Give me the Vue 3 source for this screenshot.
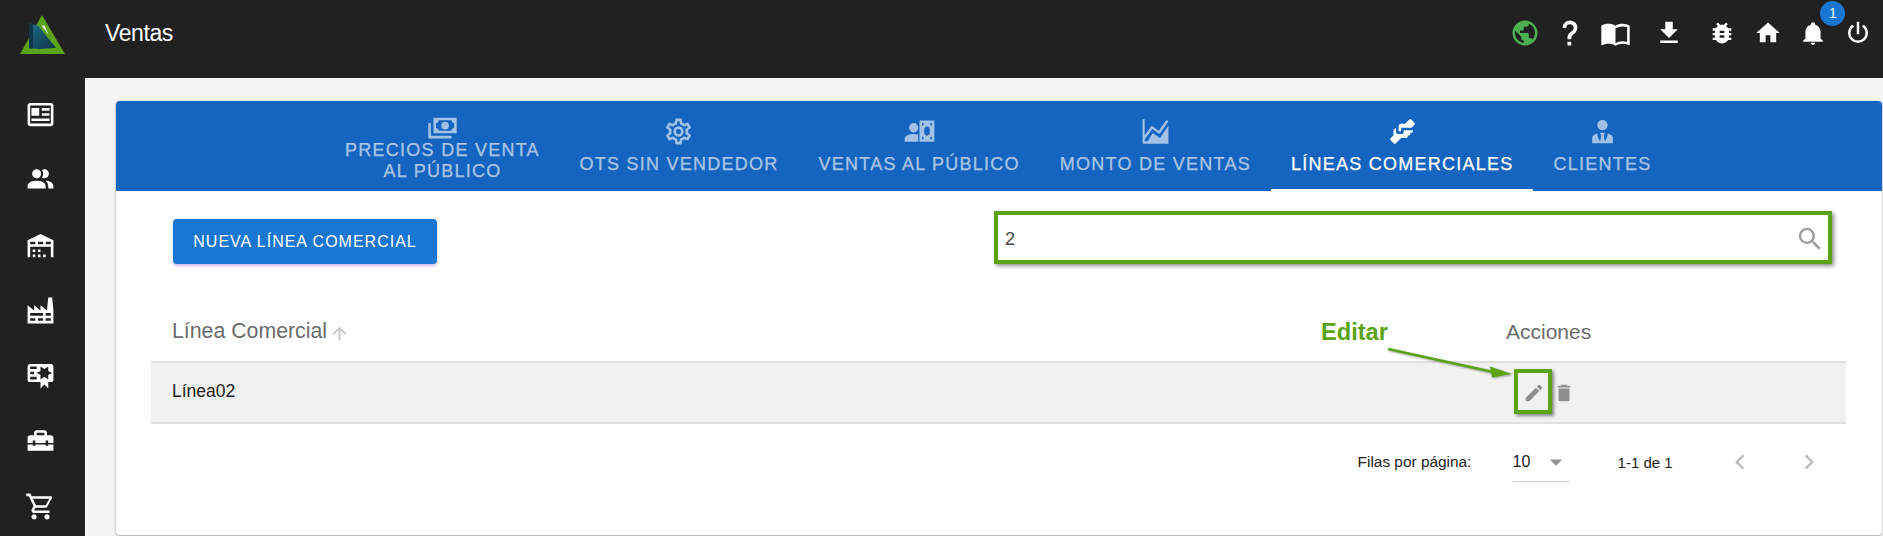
<script setup>
const side = [
  'M20 3H4C2.9 3 2 3.9 2 5V19C2 20.1 2.9 21 4 21H20C21.1 21 22 20.1 22 19V5C22 3.9 21.1 3 20 3M20 19H4V5H20V19M13 9H19V7H13V9M13 13H19V11H13V13M5 17H19V15H5V17M11 7H5V13H11V7Z',
  'M16 17V19H2V17S2 13 9 13 16 17 16 17M12.5 7.5A3.5 3.5 0 1 0 9 11A3.5 3.5 0 0 0 12.5 7.5M15.94 13A5.32 5.32 0 0 1 18 17V19H22V17S22 13.37 15.94 13M15 4A3.39 3.39 0 0 0 13.07 4.59A5 5 0 0 1 13.07 10.41A3.39 3.39 0 0 0 15 11A3.5 3.5 0 0 0 15 4Z',
  'M6 19H8V21H6V19M12 3L2 8V21H4V13H20V21H22V8L12 3M8 11H4V9H8V11M14 11H10V9H14V11M20 11H16V9H20V11M6 15H8V17H6V15M10 15H12V17H10V15M10 19H12V21H10V19M14 19H16V21H14V19Z',
  'M4,18V20H8V18H4M4,14V16H14V14H4M10,18V20H14V18H10M16,14V16H20V14H16M16,18V20H20V18H16M2,22V8L7,12V8L12,12V8L17,12L18,2H21L22,12V22H2Z',
  'M4,3C2.89,3 2,3.89 2,5V15A2,2 0 0,0 4,17H12V22L15,19L18,22V17H20A2,2 0 0,0 22,15V8L22,6V5A2,2 0 0,0 20,3H16V3H4M12,5L15,7L18,5V8.5L21,10L18,11.5V15L15,13L12,15V11.5L9,10L12,8.5V5M4,5H9V7H4V5M4,9H7V11H4V9M4,13H9V15H4V13Z',
  'M18 16H16V15H8V16H6V15H2V20H22V15H18V16M20 8H17V6C17 4.9 16.1 4 15 4H9C7.9 4 7 4.9 7 6V8H4C2.9 8 2 8.9 2 10V14H6V12H8V14H16V12H18V14H22V10C22 8.9 21.1 8 20 8M15 8H9V6H15V8Z',
  'M17,18A2,2 0 0,1 19,20A2,2 0 0,1 17,22C15.89,22 15,21.1 15,20C15,18.89 15.89,18 17,18M1,2H4.27L5.21,4H20A1,1 0 0,1 21,5C21,5.17 20.95,5.34 20.88,5.5L17.3,11.97C16.96,12.58 16.3,13 15.55,13H8.1L7.2,14.63L7.17,14.75A0.25,0.25 0 0,0 7.42,15H19V17H7C5.89,17 5,16.1 5,15C5,14.65 5.09,14.32 5.24,14.04L6.6,11.59L3,4H1V2M7,18A2,2 0 0,1 9,20A2,2 0 0,1 7,22C5.89,22 5,21.1 5,20C5,18.89 5.89,18 7,18M16,11L18.78,6H6.14L8.5,11H16Z',
]
const top = [
  { d: 'M17.9,17.39C17.64,16.59 16.89,16 16,16H15V13A1,1 0 0,0 14,12H8V10H10A1,1 0 0,0 11,9V7H13A2,2 0 0,0 15,5V4.59C17.93,5.77 20,8.64 20,12C20,14.08 19.2,15.97 17.9,17.39M11,19.93C7.05,19.44 4,16.08 4,12C4,11.38 4.08,10.78 4.21,10.21L9,15V16A2,2 0 0,0 11,18M12,2A10,10 0 0,0 2,12A10,10 0 0,0 12,22A10,10 0 0,0 22,12A10,10 0 0,0 12,2Z', cls: 'green' },
  { d: 'M10,19H13V22H10V19M12,2C17.35,2.22 19.68,7.62 16.5,11.67C15.67,12.67 14.33,13.33 13.67,14.17C13,15 13,16 13,17H10C10,15.33 10,13.92 10.67,12.92C11.33,11.92 12.67,11.33 13.5,10.67C15.92,8.43 15.32,5.26 12,5A3,3 0 0,0 9,8H6A6,6 0 0,1 12,2Z', cls: 'help' },
  { d: 'M21,5C19.89,4.65 18.67,4.5 17.5,4.5C15.55,4.5 13.45,4.9 12,6C10.55,4.9 8.45,4.5 6.5,4.5C4.55,4.5 2.45,4.9 1,6V20.65C1,20.9 1.25,21.15 1.5,21.15C1.6,21.15 1.65,21.1 1.75,21.1C3.1,20.45 5.05,20 6.5,20C8.45,20 10.55,20.4 12,21.5C13.35,20.65 15.8,20 17.5,20C19.15,20 20.85,20.3 22.25,21.05C22.35,21.1 22.4,21.1 22.5,21.1C22.75,21.1 23,20.85 23,20.6V6C22.4,5.55 21.75,5.25 21,5M21,18.5C19.9,18.15 18.7,18 17.5,18C15.8,18 13.35,18.65 12,19.5V8C13.35,7.15 15.8,6.5 17.5,6.5C18.7,6.5 19.9,6.65 21,7V18.5Z', cls: 'book' },
  { d: 'M5,20H19V18H5M19,9H15V3H9V9H5L12,16L19,9Z', cls: 'dl' },
  { d: 'M14,12H10V10H14M14,16H10V14H14M20,8H17.19C16.74,7.22 16.12,6.55 15.37,6.04L17,4.41L15.59,3L13.42,5.17C12.96,5.06 12.5,5 12,5C11.5,5 11.04,5.06 10.59,5.17L8.41,3L7,4.41L8.62,6.04C7.88,6.55 7.26,7.22 6.81,8H4V10H6.09C6.04,10.33 6,10.66 6,11V12H4V14H6V15C6,15.34 6.04,15.67 6.09,16H4V18H6.81C7.85,19.79 9.78,21 12,21C14.22,21 16.15,19.79 17.19,18H20V16H17.91C17.96,15.67 18,15.34 18,15V14H20V12H18V11C18,10.66 17.96,10.33 17.91,10H20V8Z', cls: 'bug' },
  { d: 'M10,20V14H14V20H19V12H22L12,3L2,12H5V20H10Z', cls: 'home' },
  { d: 'M21,19V20H3V19L5,17V11C5,7.9 7.03,5.17 10,4.29C10,4.19 10,4.1 10,4A2,2 0 0,1 12,2A2,2 0 0,1 14,4C14,4.1 14,4.19 14,4.29C16.97,5.17 19,7.9 19,11V17L21,19M14,21A2,2 0 0,1 12,23A2,2 0 0,1 10,21', cls: 'bell', badge: '1' },
  { d: 'M16.56,5.44L15.11,6.89C16.84,7.94 18,9.83 18,12A6,6 0 0,1 12,18A6,6 0 0,1 6,12C6,9.83 7.16,7.94 8.88,6.88L7.44,5.44C5.36,6.88 4,9.28 4,12A8,8 0 0,0 12,20A8,8 0 0,0 20,12C20,9.28 18.64,6.88 16.56,5.44M13,3H11V13H13' },
]
const tabs = [
  { label: 'PRECIOS DE VENTA AL PÚBLICO', cls: 'wrap', d: 'M5,6H23V18H5V6M14,9A3,3 0 0,1 17,12A3,3 0 0,1 14,15A3,3 0 0,1 11,12A3,3 0 0,1 14,9M9,8A2,2 0 0,1 7,10V14A2,2 0 0,1 9,16H19A2,2 0 0,1 21,14V10A2,2 0 0,1 19,8H9M1,10H3V20H19V22H1V10Z' },
  { label: 'OTS SIN VENDEDOR', d: 'M12,8A4,4 0 0,1 16,12A4,4 0 0,1 12,16A4,4 0 0,1 8,12A4,4 0 0,1 12,8M12,10A2,2 0 0,0 10,12A2,2 0 0,0 12,14A2,2 0 0,0 14,12A2,2 0 0,0 12,10M10,22C9.75,22 9.54,21.82 9.5,21.58L9.13,18.93C8.5,18.68 7.96,18.34 7.44,17.94L4.95,18.95C4.73,19.03 4.46,18.95 4.34,18.73L2.34,15.27C2.21,15.05 2.27,14.78 2.46,14.63L4.57,12.97L4.5,12L4.57,11L2.46,9.37C2.27,9.22 2.21,8.95 2.34,8.73L4.34,5.27C4.46,5.05 4.73,4.96 4.95,5.05L7.44,6.05C7.96,5.66 8.5,5.32 9.13,5.07L9.5,2.42C9.54,2.18 9.75,2 10,2H14C14.25,2 14.46,2.18 14.5,2.42L14.87,5.07C15.5,5.32 16.04,5.66 16.56,6.05L19.05,5.05C19.27,4.96 19.54,5.05 19.66,5.27L21.66,8.73C21.79,8.95 21.73,9.22 21.54,9.37L19.43,11L19.5,12L19.43,13L21.54,14.63C21.73,14.78 21.79,15.05 21.66,15.27L19.66,18.73C19.54,18.95 19.27,19.04 19.05,18.95L16.56,17.95C16.04,18.34 15.5,18.68 14.87,18.93L14.5,21.58C14.46,21.82 14.25,22 14,22H10M11.25,4L10.88,6.61C9.68,6.86 8.62,7.5 7.85,8.39L5.44,7.35L4.69,8.65L6.8,10.2C6.4,11.37 6.4,12.64 6.8,13.8L4.68,15.36L5.43,16.66L7.86,15.62C8.63,16.5 9.68,17.14 10.87,17.38L11.24,20H12.76L13.13,17.39C14.32,17.14 15.37,16.5 16.14,15.62L18.57,16.66L19.32,15.36L17.2,13.81C17.6,12.64 17.6,11.37 17.2,10.2L19.31,8.65L18.56,7.35L16.15,8.39C15.38,7.5 14.32,6.86 13.12,6.62L12.75,4H11.25Z' },
  { label: 'VENTAS AL PÚBLICO', d: 'M7.5 5.5A3.6 3.6 0 1 1 7.5 12.7A3.6 3.6 0 1 1 7.5 5.5M0.5 20V17.6C0.5 15.2 4 13.9 7.5 13.9C8.7 13.9 10 14.1 11 14.4V20H0.5M12 3.5H23.5V20H12V3.5M14 5.5V7.5C15 7.5 15.2 7.2 15.2 5.5H14M17.8 8.2A2.2 3.5 0 1 0 17.8 15.2A2.2 3.5 0 1 0 17.8 8.2M20.2 5.5C20.2 7.2 20.6 7.5 21.5 7.5V5.5H20.2M14 16V18H15.2C15.2 16.3 15 16 14 16M21.5 16C20.6 16 20.2 16.3 20.2 18H21.5V16Z' },
  { label: 'MONTO DE VENTAS', d: 'M2 2.5H3.6V15L9 7.5L14.6 11.4L20.4 3L22 4.1L15.1 14L9.5 10L3.6 18.2V19.6H6L9.9 13.1L15.5 17L22 7.6V21.5H2V2.5Z' },
  { label: 'LÍNEAS COMERCIALES', active: true, d: 'M11 6H14L17.29 2.7A1 1 0 0 1 18.71 2.7L21.29 5.29A1 1 0 0 1 21.29 6.7L19 9H11V11A1 1 0 0 1 10 12A1 1 0 0 1 9 11V8A2 2 0 0 1 11 6M5 11V15L2.71 17.29A1 1 0 0 0 2.71 18.7L5.29 21.29A1 1 0 0 0 6.71 21.29L11 17H15A1 1 0 0 0 16 16V15H17A1 1 0 0 0 18 14V13H19A1 1 0 0 0 20 12V11H13V12A2 2 0 0 1 11 14H9A2 2 0 0 1 7 12V9Z' },
  { label: 'CLIENTES', d: 'M12 3C14.21 3 16 4.79 16 7S14.21 11 12 11 8 9.21 8 7 9.79 3 12 3M16 13.54C16 14.6 15.72 17.07 13.81 19.83L13 15L13.94 13.12C13.32 13.05 12.67 13 12 13S10.68 13.05 10.06 13.12L11 15L10.19 19.83C8.28 17.07 8 14.6 8 13.54C5.61 14.24 4 15.5 4 17V21H20V17C20 15.5 18.4 14.24 16 13.54Z' },
]
</script>

<template>
  <div class="app">
    <header class="topbar">
      <div class="logo">
        <svg viewBox="0 0 46 40" width="46" height="40">
          <defs>
            <linearGradient id="lg" x1="0" y1="0" x2="1" y2="1">
              <stop offset="0" stop-color="#1d6a86" />
              <stop offset="1" stop-color="#0d3446" />
            </linearGradient>
          </defs>
          <path d="M22 0L45 39H0Z" fill="#5aa314" />
          <path d="M9 8.3L18 10.7L36 32.7L20 34L9 33.3Z" fill="url(#lg)" />
          <path d="M9 8.3L13 9.5L13 33.5L9 33.3Z" fill="#0e3648" />
          <path d="M21.7 10.7L24.5 10.5L28.5 19.5Z" fill="#fff" />
        </svg>
      </div>
      <h1 class="title">Ventas</h1>
      <div class="actions">
        <div v-for="(t, i) in top" :key="i" class="action" :class="t.cls">
          <svg viewBox="0 0 24 24"><path :d="t.d" /></svg>
          <span v-if="t.badge" class="badge">{{ t.badge }}</span>
        </div>
      </div>
    </header>

    <div class="body">
      <nav class="sidebar">
        <svg v-for="(d, i) in side" :key="i" viewBox="0 0 24 24"><path :d="d" /></svg>
      </nav>

      <main class="main">
        <section class="card">
          <div class="tabs">
            <div v-for="t in tabs" :key="t.label" class="tab" :class="[t.cls, { active: t.active }]">
              <svg viewBox="0 0 24 24"><path :d="t.d" /></svg>
              <span>{{ t.label }}</span>
            </div>
          </div>

          <div class="toolbar">
            <button class="btn" type="button">NUEVA LÍNEA COMERCIAL</button>
            <div class="search">
              <span class="value">2</span>
              <svg viewBox="0 0 24 24"><path d="M9.5,3A6.5,6.5 0 0,1 16,9.5C16,11.11 15.41,12.59 14.44,13.73L14.71,14H15.5L20.5,19L19,20.5L14,15.5V14.71L13.73,14.44C12.59,15.41 11.11,16 9.5,16A6.5,6.5 0 0,1 3,9.5A6.5,6.5 0 0,1 9.5,3M9.5,5C7,5 5,7 5,9.5C5,12 7,14 9.5,14C12,14 14,12 14,9.5C14,7 12,5 9.5,5Z" /></svg>
            </div>
          </div>

          <div class="table">
            <div class="thead">
              <div class="col-name">
                Línea Comercial
                <svg viewBox="0 0 24 24"><path d="M13,20H11V8L5.5,13.5L4.08,12.08L12,4.16L19.92,12.08L18.5,13.5L13,8V20Z" /></svg>
              </div>
              <div class="col-act">Acciones</div>
            </div>
            <div class="row">
              <div class="col-name">Línea02</div>
              <div class="col-act icons">
                <svg viewBox="0 0 24 24"><path d="M20.71,7.04C21.1,6.65 21.1,6 20.71,5.63L18.37,3.29C18,2.9 17.35,2.9 16.96,3.29L15.12,5.12L18.87,8.87M3,17.25V21H6.75L17.81,9.93L14.06,6.18L3,17.25Z" /></svg>
                <svg viewBox="0 0 24 24"><path d="M19,4H15.5L14.5,3H9.5L8.5,4H5V6H19M6,19A2,2 0 0,0 8,21H16A2,2 0 0,0 18,19V7H6V19Z" /></svg>
              </div>
            </div>
          </div>

          <div class="pager">
            <span class="rows-label">Filas por página:</span>
            <div class="select">
              <span>10</span>
              <svg viewBox="0 0 24 24"><path d="M7,10L12,15L17,10H7Z" /></svg>
            </div>
            <span class="range">1-1 de 1</span>
            <svg class="chev" viewBox="0 0 24 24"><path d="M15.41,16.58L10.83,12L15.41,7.41L14,6L8,12L14,18L15.41,16.58Z" /></svg>
            <svg class="chev next" viewBox="0 0 24 24"><path d="M8.59,16.58L13.17,12L8.59,7.41L10,6L16,12L10,18L8.59,16.58Z" /></svg>
          </div>
        </section>
      </main>
    </div>

    <!-- Screenshot annotations drawn over the page -->
    <div class="mark-box"></div>
    <span class="mark-label">Editar</span>
    <svg class="mark-arrow" width="140" height="40" viewBox="0 0 140 40">
      <path d="M1 3L106 26" stroke="#5aa314" stroke-width="2.6" fill="none" />
      <path d="M125 28L103 20.5L105 31.5Z" fill="#5aa314" />
    </svg>
  </div>
</template>

<style>
html, body { margin: 0; overflow: hidden; background: #212121; }
</style>

<style scoped>
.app { width: 1883px; height: 536px; position: relative; overflow: hidden; background: #212121; font-family: "Liberation Sans", Arial, sans-serif; }

.topbar { height: 78px; display: flex; align-items: flex-start; background: #212121; color: #fff; }
.logo { width: 85px; padding: 15px 0 0 20px; box-sizing: border-box; height: 78px; flex: none; }
.title { margin: 20px 0 0 20px; font-size: 23px; line-height: 26px; font-weight: 400; letter-spacing: -0.4px; }
.actions { margin-left: auto; display: flex; padding: 17px 2px 0 0; }
.action { width: 45.3px; height: 32px; display: flex; justify-content: center; align-items: center; position: relative; }
.action svg { width: 30px; height: 30px; fill: #fff; flex: none; }
.action.book svg { width: 31px; height: 31px; }
.action.help { left: -1px; }
.action.dl { margin-left: 8px; }
.action.bug { margin-left: 8px; }
.action.bug svg, .action.home svg { width: 28px; height: 28px; }
.action.bell svg { width: 26px; height: 26px; }
.action.green svg { fill: #4caf50; }
.badge { position: absolute; left: 30px; top: -16.5px; width: 25px; height: 25px; border-radius: 50%; background: #1976d2; color: #fff; font-size: 14px; line-height: 25px; text-align: center; }

.body { display: flex; height: 458px; }
.sidebar { width: 85px; flex: none; display: flex; flex-direction: column; align-items: center; gap: 34.3px; padding: 21px 5px 0 0; box-sizing: border-box; }
.sidebar svg { width: 31px; height: 31px; fill: #fff; flex: none; }

.main { flex: 1; background: #f5f5f5; padding: 23px 1px 0 31px; box-sizing: border-box; min-width: 0; }
.card { height: 434px; background: #fff; border-radius: 4px; box-shadow: 0 1px 3px rgba(0,0,0,.35); overflow: hidden; }

.tabs { height: 90px; background: #1565c0; display: flex; justify-content: center; padding-right: 1px; }
.tab { padding: 0 20px 16px; display: flex; flex-direction: column; align-items: center; justify-content: flex-end; color: rgba(255,255,255,.6); font-size: 18px; letter-spacing: 1.25px; line-height: 21px; text-align: center; box-sizing: border-box; white-space: nowrap; -webkit-text-stroke: 0.25px currentColor; }
.tab.wrap { white-space: normal; width: 234px; padding: 0 14px 9px; }
.tab svg { width: 31px; height: 31px; fill: currentColor; margin-bottom: 7px; flex: none; }
.tab.wrap svg { margin-bottom: -0.5px; }
.tab.active { color: #fff; border-bottom: 2px solid #fff; padding-bottom: 14px; }

.toolbar { display: flex; justify-content: space-between; align-items: flex-start; padding: 20px 50px 0 57px; }
.btn { width: 264px; height: 45px; margin-top: 8px; border: 0; border-radius: 4px; background: #1976d2; color: #fff; font-family: inherit; font-size: 16px; letter-spacing: 1px; box-shadow: 0 2px 3px rgba(90,40,170,.3); padding: 0; }
.search { width: 838px; height: 53px; box-sizing: border-box; border: 4px solid #5aa314; box-shadow: 2px 2px 4px rgba(0,0,0,.45); display: flex; align-items: center; justify-content: space-between; padding: 3px 3px 0 7px; color: #444; font-size: 18px; }
.search svg { width: 30px; height: 30px; fill: #9e9e9e; }

.table { margin: 42px 36px 0 35px; }
.thead { height: 57px; padding-bottom: 4px; display: flex; align-items: center; font-size: 21.3px; color: #6b6b6b; border-bottom: 2px solid #e0e0e0; box-sizing: border-box; }
.col-name { flex: 1; padding-left: 21px; display: flex; align-items: center; }
.col-name svg { width: 21px; height: 21px; fill: #c4c4c4; margin: 3px 0 0 2px; flex: none; }
.col-act { width: 340px; }
.thead .col-act { font-size: 21px; }
.row { height: 61px; display: flex; align-items: center; background: #f1f1f1; border-bottom: 2px solid #e0e0e0; box-sizing: border-box; font-size: 17.5px; color: #212121; }
.row .col-name { padding-bottom: 2px; }
.icons { display: flex; align-items: center; gap: 8px; padding-left: 17px; box-sizing: border-box; }
.icons svg { width: 22px; height: 22px; fill: #8f8f8f; }

.pager { display: flex; align-items: center; height: 40px; margin-top: 18px; padding-left: 1241.6px; font-size: 15.4px; color: #212121; }
.rows-label { width: 114px; white-space: nowrap; }
.select { width: 57px; height: 40px; margin-left: 41px; box-sizing: border-box; border-bottom: 1px solid #ccc; display: flex; align-items: flex-start; padding-top: 11px; font-size: 16px; line-height: 18px; }
.select svg { width: 30px; height: 30px; fill: #8f8f8f; margin: -6px 0 0 11px; flex: none; }
.range { margin-left: 48px; font-size: 15px; width: 54px; white-space: nowrap; }
.chev { width: 30px; height: 30px; fill: #bdbdbd; margin-left: 53px; flex: none; }
.chev.next { margin-left: 39px; }

.mark-box { position: absolute; left: 1514px; top: 369px; width: 38px; height: 45px; box-sizing: border-box; border: 4px solid #5aa314; box-shadow: 2px 2px 3px rgba(0,0,0,.45); }
.mark-label { position: absolute; left: 1321px; top: 320px; font-size: 23.6px; font-weight: 700; color: #5aa314; line-height: 24px; }
.mark-arrow { position: absolute; left: 1387px; top: 346px; filter: drop-shadow(1px 1px 1px rgba(0,0,0,.35)); }
</style>
